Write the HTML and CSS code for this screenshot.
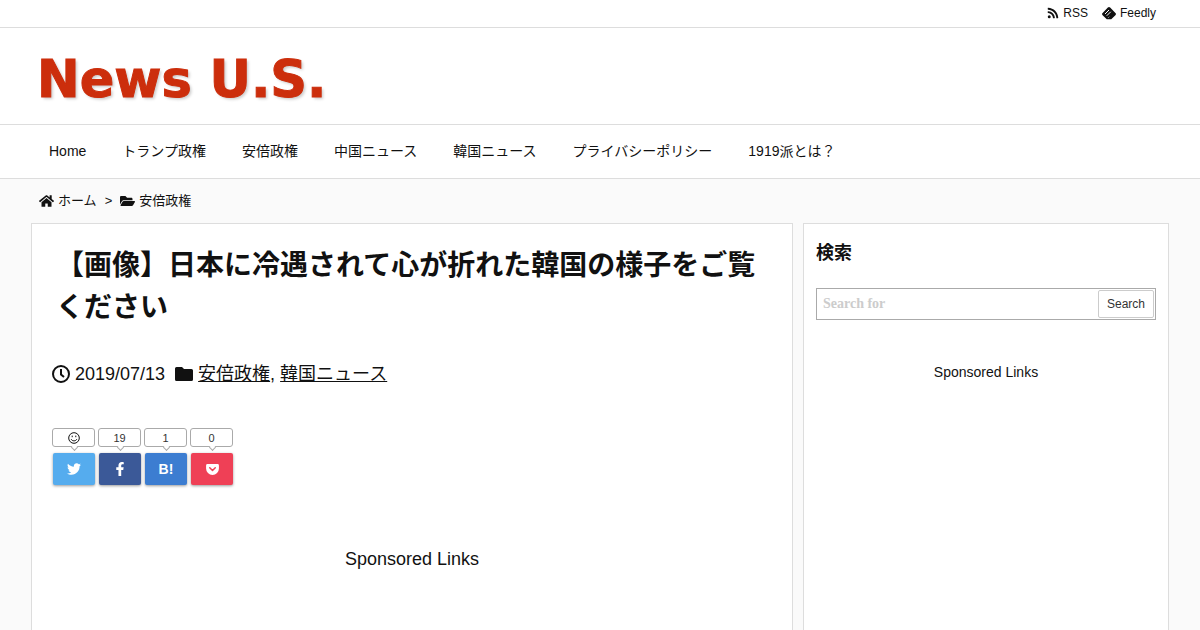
FILE: index.html
```html
<!DOCTYPE html>
<html lang="ja">
<head>
  <meta charset="UTF-8">
  <title>【画像】日本に冷遇されて心が折れた韓国の様子をご覧ください | News U.S.</title>
  <meta name="viewport" content="width=device-width, initial-scale=1.0">
  <link rel="stylesheet" href="styles.css">
</head>
<body>
  <div class="topbar">
    <div class="container topbar-links">
      <a href="#">
        <svg class="icon" viewBox="0 0 448 512"><path d="M128 416a64 64 0 1 1-128 0 64 64 0 0 1 128 0zM303 463C295 304 176 176 17 177c-9 0-17 7-17 16v48c0 8 7 16 15 16 111 7 201 96 208 208 1 8 8 15 16 15h48c9 0 17-8 16-17zm145 0C440 229 252 40 17 32 8 32 0 39 0 48v48c0 9 7 16 15 16 191 8 345 162 353 353 0 8 7 15 16 15h48c9 0 16-8 16-17z"/></svg>
        RSS
      </a>
      <a href="#">
        <svg class="icon icon-feedly" viewBox="0 0 28 26"><path d="M11.700 1.200a3.200 3.200 0 0 1 4.600 0l10.500 10.600a3.200 3.200 0 0 1 0 4.600L18.500 24.500H9.500L1.200 16.400a3.200 3.200 0 0 1 0-4.600z"/><path d="M6 14l8-8M9.500 17.500l8-8M12.800 21l1.400-1.400" stroke="#fff" stroke-width="2"/></svg>
        Feedly
      </a>
    </div>
  </div>

  <header class="header">
    <div class="container">
      <a class="logo" href="#">News U.S.</a>
    </div>
  </header>

  <nav class="nav">
    <ul class="container nav-list">
      <li><a href="#">Home</a></li>
      <li><a href="#">トランプ政権</a></li>
      <li><a href="#">安倍政権</a></li>
      <li><a href="#">中国ニュース</a></li>
      <li><a href="#">韓国ニュース</a></li>
      <li><a href="#">プライバシーポリシー</a></li>
      <li><a href="#">1919派とは？</a></li>
    </ul>
  </nav>

  <div class="container breadcrumb">
    <a href="#">
      <svg class="icon" viewBox="0 0 576 512"><path d="M280 148L96 300v164c0 9 7 16 16 16h112c9 0 16-7 16-16v-96c0-9 7-16 16-16h64c9 0 16 7 16 16v96c0 9 7 16 16 16h112c9 0 16-7 16-16V300L296 148c-5-4-11-4-16 0zM572 251l-84-69V44c0-7-5-12-12-12h-56c-7 0-12 5-12 12v73l-90-74c-17-14-43-14-60 0L4 251c-5 4-5 12-1 17l25 31c5 5 12 6 17 2L280 107c5-4 11-4 16 0l235 194c5 4 13 3 17-2l25-31c5-5 4-13-1-17z"/></svg>
      ホーム
    </a>
    <span>&gt;</span>
    <a href="#">
      <svg class="icon" viewBox="0 0 576 512"><path d="M573 295l-73 124c-8 15-28 29-51 29H45c-18 0-30-20-20-36l72-124c9-15 29-32 52-32h404c18 0 30 23 20 39zM149 224h331v-48c0-27-21-48-48-48H272l-64-64H48C21 64 0 85 0 112v278l69-118c17-29 47-48 80-48z"/></svg>
      安倍政権
    </a>
  </div>

  <div class="container columns">
    <main class="card article">
      <h1>【画像】日本に冷遇されて心が折れた韓国の様子をご覧ください</h1>

      <div class="meta">
        <svg class="icon" viewBox="0 0 18 18"><circle cx="9" cy="9" r="8" fill="none" stroke="currentColor" stroke-width="2"/><path d="M9 4v5.500l3 2.500" fill="none" stroke="currentColor" stroke-width="2"/></svg>
        <time datetime="2019-07-13">2019/07/13</time>
        <svg class="icon icon-folder" viewBox="0 0 18 14"><path d="M1.500 0H7l2 2h7.500A1.500 1.500 0 0 1 18 3.500v9a1.500 1.500 0 0 1-1.500 1.500h-15A1.500 1.500 0 0 1 0 12.500v-11A1.500 1.500 0 0 1 1.500 0z"/></svg>
        <span><a href="#">安倍政権</a>, <a href="#">韓国ニュース</a></span>
      </div>

      <ul class="share">
        <li>
          <span class="count">
            <svg class="icon icon-smile" viewBox="0 0 12 12"><circle cx="6" cy="6" r="5.300"/><path d="M3.200 7.200c1 2.200 4.600 2.200 5.600 0M4.200 3.600v1.600M7.800 3.600v1.600"/></svg>
          </span>
          <a class="btn twitter" href="#" aria-label="Twitter">
            <svg class="icon" viewBox="0 0 512 512"><path d="M459 152c0 4 1 9 1 13 0 139-106 299-299 299-59 0-115-17-161-47 8 1 16 1 25 1 49 0 94-16 130-45-46-1-84-31-98-73 7 1 13 2 20 2 9 0 19-2 28-4-48-10-84-52-84-103v-1c14 8 30 13 47 13-28-19-47-51-47-87 0-20 5-37 14-53 52 64 130 105 217 110-2-8-3-16-3-24 0-58 47-105 105-105 30 0 58 13 77 33 24-4 46-13 66-25-8 25-24 45-46 58 21-2 42-8 61-16-14 21-32 39-53 54z"/></svg>
          </a>
        </li>
        <li>
          <span class="count">19</span>
          <a class="btn facebook" href="#" aria-label="Facebook">
            <svg class="icon" viewBox="0 0 320 512"><path d="M279 288l14-93h-89v-60c0-25 12-50 52-50h41V7s-37-7-72-7c-73 0-121 44-121 125v70H23v93h81v224h100V288z"/></svg>
          </a>
        </li>
        <li>
          <span class="count">1</span>
          <a class="btn hatena" href="#">B!</a>
        </li>
        <li>
          <span class="count">0</span>
          <a class="btn pocket" href="#" aria-label="Pocket">
            <svg class="icon icon-pocket" viewBox="0 0 14 12"><path d="M1.500 0h11A1.500 1.500 0 0 1 14 1.500V5A7 7 0 0 1 0 5V1.500A1.500 1.500 0 0 1 1.500 0z"/><path d="M4 4l3 3 3-3" fill="none" stroke="#ef4056" stroke-width="1.600" stroke-linecap="round" stroke-linejoin="round"/></svg>
          </a>
        </li>
      </ul>

      <p class="sponsored">Sponsored Links</p>
    </main>

    <aside class="card sidebar">
      <h3>検索</h3>
      <form class="search">
        <input type="search" placeholder="Search for" aria-label="Search for">
        <button type="submit">Search</button>
      </form>
      <p class="sponsored">Sponsored Links</p>
    </aside>
  </div>
</body>
</html>
```
FILE: styles.css
```css
* {
  box-sizing: border-box;
}

body {
  margin: 0;
  font-family: "Liberation Sans", Arial, "Noto Sans CJK JP", sans-serif;
  font-size: 14px;
  line-height: 20px;
  color: #111;
  background: #fafafa;
}

a {
  color: inherit;
  text-decoration: none;
}

ul {
  list-style: none;
  margin: 0;
  padding: 0;
}

.container {
  max-width: 1138px;
  margin: 0 auto;
}

.icon {
  width: 14px;
  height: 14px;
  fill: currentColor;
  flex: none;
}

/* Top bar */
.topbar {
  background: #fff;
  border-bottom: 1px solid #ddd;
  font-size: 12px;
}

.topbar-links {
  display: flex;
  justify-content: flex-end;
  gap: 14px;
  padding: 3px 13px 4px;
}

.topbar-links a {
  display: flex;
  align-items: center;
  gap: 4px;
}

.topbar .icon {
  width: 12px;
  height: 12px;
}

.topbar .icon-feedly {
  width: 14px;
  height: 13px;
}

/* Header */
.header {
  background: #fff;
  border-bottom: 1px solid #ddd;
}

.header .container {
  padding: 22px 6px 14px;
}

.logo {
  display: block;
  font-family: "DejaVu Sans", sans-serif;
  font-size: 51px;
  font-weight: bold;
  line-height: 60px;
  color: #cc2e0c;
  -webkit-text-stroke: 1px #cc2e0c;
  text-shadow: 2px 2px 3px #ccc;
}

/* Navigation */
.nav {
  background: #fff;
  border-bottom: 1px solid #ddd;
}

.nav-list {
  display: flex;
  flex-wrap: wrap;
}

.nav-list a {
  display: block;
  padding: 16px 18px 17px;
}

/* Breadcrumb */
.breadcrumb {
  display: flex;
  gap: 8px;
  padding: 12px 8px;
  font-size: 13px;
}

.breadcrumb a {
  display: flex;
  align-items: center;
  gap: 4px;
}

.breadcrumb .icon {
  width: 15px;
}

/* Columns */
.columns {
  display: flex;
  gap: 10px;
}

.card {
  background: #fff;
  border: 1px solid #ddd;
  min-height: 600px;
}

.article {
  flex: 1;
  padding: 21px 20px;
  font-size: 18px;
}

.article h1 {
  margin: 0 0 35px;
  padding: 0 4px;
  font-size: 28px;
  line-height: 42px;
}

.meta {
  display: flex;
  align-items: center;
  gap: 5px;
  line-height: 20px;
}

.meta .icon {
  width: 18px;
  height: 18px;
}

.meta .icon-folder {
  height: 14px;
  margin-left: 5px;
}

.meta a {
  text-decoration: underline;
}

/* Share buttons */
.share {
  display: flex;
  gap: 3px;
  margin: 44px 0 64px;
}

.share li {
  width: 43px;
}

.count {
  position: relative;
  display: flex;
  align-items: center;
  justify-content: center;
  height: 19px;
  border: 1px solid #aaa;
  border-radius: 3px;
  font-size: 11px;
  color: #333;
}

.count .icon-smile {
  width: 12px;
  height: 12px;
  fill: none;
  stroke: #111;
}

.count::after {
  content: "";
  position: absolute;
  top: 100%;
  left: 50%;
  width: 4px;
  height: 4px;
  margin: -1px 0 0 -2px;
  background: #fff;
  border: solid #aaa;
  border-width: 0 1px 1px 0;
  transform: rotate(45deg);
}

.btn {
  display: flex;
  align-items: center;
  justify-content: center;
  height: 32px;
  margin: 6px 0 0 1px;
  border-radius: 2px;
  box-shadow: 0 1px 3px rgba(0, 0, 0, 0.4);
  font-size: 14px;
  font-weight: bold;
  color: #fff;
}

.btn .icon-pocket {
  width: 13px;
  height: 11px;
}

.twitter {
  background: #55acee;
}

.facebook {
  background: #3b5998;
}

.hatena {
  background: #3c7dd1;
}

.pocket {
  background: #ef4056;
}

.sponsored {
  margin: 0;
  text-align: center;
}

/* Sidebar */
.sidebar {
  width: 366px;
  padding: 18px 12px;
}

.sidebar h3 {
  margin: 0 0 24px;
  font-size: 18px;
  line-height: 22px;
}

.search {
  display: flex;
  margin-bottom: 42px;
  padding: 1px;
  border: 1px solid #aaa;
}

.search input {
  flex: 1;
  min-width: 0;
  padding: 0 5px;
  border: none;
  outline: none;
  font-family: "Liberation Serif", serif;
  font-size: 14px;
  font-weight: bold;
}

.search input::placeholder {
  color: #ccc;
}

.search button {
  height: 28px;
  padding: 0 8px;
  background: #fff;
  border: 1px solid #ccc;
  border-radius: 2px;
  font-family: inherit;
  font-size: 12px;
  color: #333;
  cursor: pointer;
}

@media (max-width: 900px) {
  .columns {
    flex-direction: column;
  }

  .sidebar {
    width: auto;
  }
}
```
